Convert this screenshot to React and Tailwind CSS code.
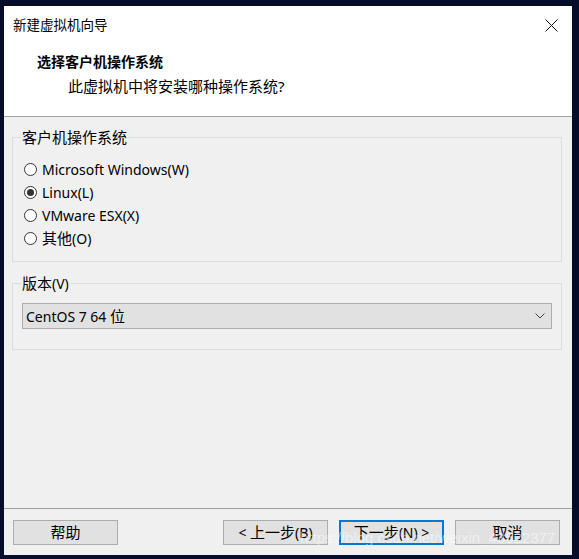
import React from "react";

const font = { fontFamily: "'Noto Sans', 'Noto Sans CJK SC', sans-serif" };

function Cjk({ children }) {
    return <span className="text-[15px] leading-[20px]">{children}</span>;
}

function Radio({ label, checked }) {
    return (
        <div className="flex items-center h-[23px] pl-[11px]">
            <span className="w-[13px] h-[13px] rounded-full border border-[#333] bg-white flex items-center justify-center">
                {checked && <span className="w-[7px] h-[7px] rounded-full bg-[#333]" />}
            </span>
            <span className="ml-[5px] text-[14px] leading-[20px] text-black">{label}</span>
        </div>
    );
}

function Button({ children, focused }) {
    return (
        <div
            className={
                "w-[105px] h-[25px] flex items-center justify-center text-[14px] text-black bg-[#e1e1e1] " +
                (focused ? "border-2 border-[#0078d7]" : "border border-[#adadad]")
            }
        >
            <span className="whitespace-pre">{children}</span>
        </div>
    );
}

export default function App() {
    return (
        <div className="w-[579px] h-[559px] bg-[#050d2b] pt-[6px] pl-[4px] relative" style={font}>
            <div className="w-[568px] h-[549px] flex flex-col bg-[#f0f0f0]">
                <div className="h-[38px] bg-white flex items-center justify-between pl-[9px] pr-[14px]">
                    <span className="text-[13.5px] text-black">新建虚拟机向导</span>
                    <svg width="13" height="13" viewBox="0 0 13 13">
                        <path d="M0.5 0.5L12.5 12.5M12.5 0.5L0.5 12.5" stroke="#111" strokeWidth="1" />
                    </svg>
                </div>
                <div className="h-[73px] bg-white border-b border-[#a0a0a0] pt-[8px]">
                    <div className="pl-[33px] text-[14px] leading-[20px] font-bold text-black">选择客户机操作系统</div>
                    <div className="pl-[64px] mt-[4px] text-[15px] leading-[20px] text-black">此虚拟机中将安装哪种操作系统?</div>
                </div>

                <fieldset className="mt-[10px] ml-[8px] mr-[10px] border border-[#dcdcdc] pb-[11px]">
                    <legend className="ml-[8px] px-[1px] text-[15px] leading-[20px] text-black">客户机操作系统</legend>
                    <div className="pt-[11px]">
                        <Radio label="Microsoft Windows(W)" />
                        <Radio label="Linux(L)" checked />
                        <Radio label="VMware ESX(X)" />
                        <Radio label={<><Cjk>其他</Cjk>(O)</>} />
                    </div>
                </fieldset>

                <fieldset className="mt-[11px] ml-[8px] mr-[10px] border border-[#dcdcdc] pb-[20px]">
                    <legend className="ml-[8px] px-[1px] text-[14px] leading-[20px] text-black">
                        <Cjk>版本</Cjk>(V)
                    </legend>
                    <div className="pt-[9px] pl-[9px] pr-[9px]">
                        <div className="h-[26px] border border-[#adadad] bg-[#e1e1e1] flex items-center justify-between pl-[3px] pr-[6px]">
                            <span className="text-[14px] leading-[20px] text-black">
                                CentOS 7 64 <Cjk>位</Cjk>
                            </span>
                            <svg width="10" height="6" viewBox="0 0 10 6">
                                <path d="M0.5 0.5L5 5L9.5 0.5" fill="none" stroke="#444" strokeWidth="1" />
                            </svg>
                        </div>
                    </div>
                </fieldset>

                <div className="flex-1" />

                <div className="border-t border-[#a0a0a0] pt-[11px] pb-[10px] pl-[9px] pr-[12px] flex justify-between">
                    <Button>
                        <Cjk>帮助</Cjk>
                    </Button>
                    <div className="flex gap-[11px]">
                        <Button>
                            {"< "}<Cjk>上一步</Cjk>(B)
                        </Button>
                        <Button focused>
                            <Cjk>下一步</Cjk>{"(N) >"}
                        </Button>
                        <Button>
                            <Cjk>取消</Cjk>
                        </Button>
                    </div>
                </div>
            </div>
            <div
                className="absolute left-[300px] top-[529px] text-[15px] leading-[18px] text-white/50 whitespace-nowrap"
                style={{ fontFamily: "'Liberation Sans', Arial, sans-serif" }}
            >
                https://blog.csdn.net/weixin_43522377
            </div>
        </div>
    );
}
